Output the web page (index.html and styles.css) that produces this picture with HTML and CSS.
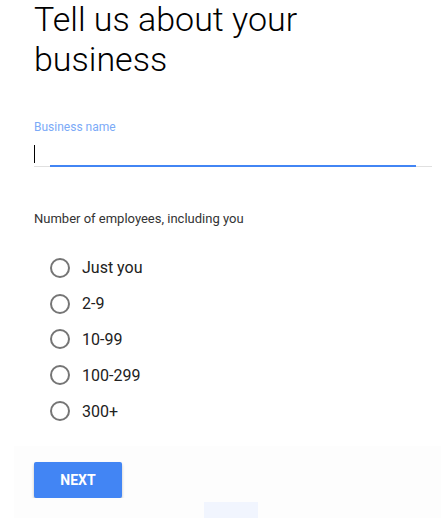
FILE: index.html
```html
<!DOCTYPE html>
<html lang="en">
<head>
    <meta charset="UTF-8">
    <meta name="viewport" content="width=device-width, initial-scale=1.0">
    <title>Tell us about your business</title>
    <link rel="stylesheet" href="styles.css">
</head>
<body>
    <div class="page">
        <h1 class="title">Tell us about your business</h1>

        <div class="field">
            <label class="field-label" for="businessName">Business name</label>
            <div class="field-input">
                <span class="caret"></span>
                <div class="line"><div class="line-active"></div></div>
            </div>
        </div>

        <p class="question">Number of employees, including you</p>

        <div class="options">
            <label class="option"><span class="radio"></span>Just you</label>
            <label class="option"><span class="radio"></span>2-9</label>
            <label class="option"><span class="radio"></span>10-99</label>
            <label class="option"><span class="radio"></span>100-299</label>
            <label class="option"><span class="radio"></span>300+</label>
        </div>

        <div class="footer">
            <button class="next-btn">NEXT</button>
        </div>
    </div>
    <div class="backdrop">
        <div class="backdrop-mark"></div>
    </div>
</body>
</html>
```
FILE: styles.css
```css
body {
    margin: 0;
    background: #fff;
    font-family: Roboto, "Liberation Sans", Arial, sans-serif;
    color: #212121;
}

.page {
    padding: 0 9px 0 34px;
    position: relative;
    z-index: 1;
}

.title {
    margin: -1px 0 0;
    font-size: 34px;
    font-weight: 300;
    line-height: 40px;
    width: 290px;
    color: #000;
}

.field {
    margin-top: 41px;
}

.field-label {
    display: block;
    font-size: 12px;
    color: #7baaf7;
    line-height: 14px;
}

.field-input {
    margin-top: 11px;
}

.caret {
    display: block;
    width: 1px;
    height: 18px;
    background: #000;
}

.line {
    height: 1px;
    background: #e0e0e0;
    margin-top: 3px;
    position: relative;
}

.line-active {
    position: absolute;
    left: 16px;
    right: 16px;
    top: -1px;
    height: 2px;
    background: #4285f4;
}

.question {
    margin: 44px 0 0;
    font-size: 13px;
    line-height: 16px;
    color: #333;
}

.options {
    margin-top: 23px;
    padding-left: 16px;
    display: flex;
    flex-direction: column;
}

.option {
    display: flex;
    align-items: center;
    gap: 12px;
    height: 35.8px;
    font-size: 16px;
}

.radio {
    width: 16px;
    height: 16px;
    border: 2px solid #757575;
    border-radius: 50%;
}

.footer {
    margin-top: 33px;
}

.next-btn {
    width: 88px;
    height: 36px;
    border: none;
    border-radius: 2px;
    background: #4285f4;
    color: #fff;
    font-family: Roboto, "Liberation Sans", Arial, sans-serif;
    font-size: 14px;
    font-weight: 700;
    box-shadow: 0 2px 3px rgba(0, 0, 0, 0.25);
}

.backdrop {
    position: absolute;
    left: 14px;
    right: 0;
    top: 446px;
    height: 72px;
    background: #fdfdfd;
}

.backdrop-mark {
    position: absolute;
    left: 190px;
    top: 56px;
    width: 54px;
    height: 16px;
    background: #f1f5fe;
}
```
